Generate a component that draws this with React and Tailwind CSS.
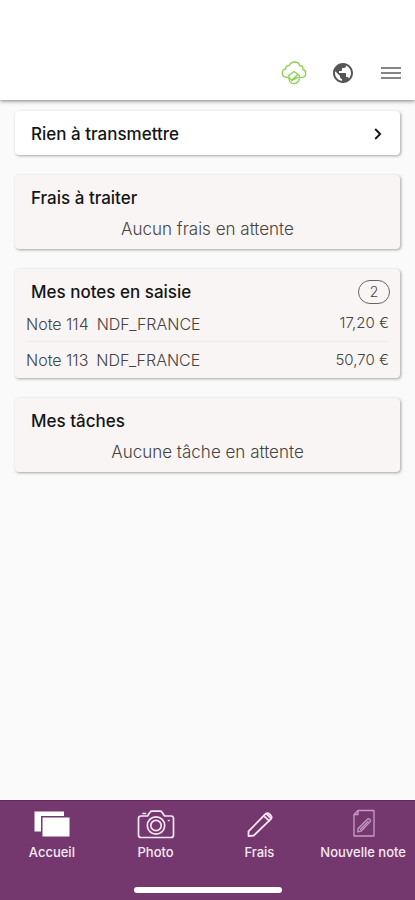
import React from 'react';
import { MdPublic } from 'react-icons/md';

const NOTES = [
  { id: 114, company: 'NDF_FRANCE', amount: '17,20 €' },
  { id: 113, company: 'NDF_FRANCE', amount: '50,70 €' },
];

function CloudIcon() {
  return (
    <svg width="26" height="26" viewBox="0 0 26 26" fill="none" stroke="#8bd04f" strokeWidth="1.3" strokeLinecap="round" strokeLinejoin="round">
      <path d="M6.8 17.3H5.2C2.8 17 1.3 15.2 1.3 13C1.3 10.8 2.8 9.2 4.8 8.9C4.5 6.7 6 5.3 8.2 5.6C9.2 3.2 11 2 13.5 2C16.2 2 18.2 3.5 18.9 5.8C21.3 5.5 22.5 7.3 21.8 9.3C23.7 9.8 24.7 11.2 24.7 13.2C24.7 15.5 23.3 17.2 21 17.3H19.3" />
      <path d="M7.6 15.8L13 11.5L18.2 15.3" />
      <path d="M7.9 16C7.2 20.5 9.8 23.7 13 23.7C16.6 23.7 19 20.4 18.2 15.6" />
      <path d="M8.5 18.2L11 19.9L16.6 14.8M10.6 20.8L16.8 17.4" />
    </svg>
  );
}

function MenuIcon() {
  return (
    <svg width="20" height="14" viewBox="0 0 20 14" fill="#858585">
      <rect y="1" width="20" height="2" />
      <rect y="6" width="20" height="2" />
      <rect y="11" width="20" height="2" />
    </svg>
  );
}

function ChevronIcon() {
  return (
    <svg width="8" height="12" viewBox="0 0 8 12" fill="none" stroke="#111" strokeWidth="1.8">
      <path d="M1.2 1L6.2 6L1.2 11" />
    </svg>
  );
}

function HomeIcon() {
  return (
    <svg width="38" height="30" viewBox="0 0 38 30" fill="#fff">
      <path d="M1.5 2.5H31V7H8V22.5H1.5Z" />
      <rect x="9.5" y="8.5" width="27" height="19" />
    </svg>
  );
}

function CameraIcon() {
  return (
    <svg width="38" height="30" viewBox="0 0 38 30" fill="none" stroke="#f5e6f3" strokeWidth="1.7" strokeLinecap="round" strokeLinejoin="round">
      <path d="M4 7H10.5L13 3.2Q13.6 2.2 14.8 2.2H23.2Q24.4 2.2 25 3.2L27.5 7H34Q36.5 7 36.5 9.5V26Q36.5 28.5 34 28.5H4Q1.5 28.5 1.5 26V9.5Q1.5 7 4 7Z" />
      <circle cx="19" cy="16.5" r="8.7" />
      <circle cx="19" cy="16.5" r="5.2" />
      <path d="M6 4.5H8.5M31.5 11.5H32" />
    </svg>
  );
}

function PencilIcon() {
  return (
    <svg width="30" height="30" viewBox="0 0 30 30" fill="none" stroke="#f5e6f3" strokeWidth="1.8" strokeLinecap="round" strokeLinejoin="round">
      <path d="M4.5 27.2V22.3L21.3 5.2Q23.3 3.2 25.3 5L26.8 6.5Q28.5 8.3 26.8 10.2L9.8 26.5L4.5 27.2Z" />
      <path d="M19.8 6.8L25.2 11.8M22.5 4.8L27 9.3" />
    </svg>
  );
}

function NewNoteIcon() {
  return (
    <svg width="24" height="30" viewBox="0 0 24 30" fill="none" stroke="#c79bc4" strokeWidth="1.3" strokeLinejoin="round">
      <path d="M7 1.5H23V27H3V5.5ZM7 1.5V5.5H3" />
      <path d="M6.8 22.8L7.2 19.5L16.5 10.2Q17.5 9.3 18.5 10.2L19.2 10.9Q20 11.9 19 12.9L10 22.2Z" />
      <path d="M9 20.8L17.5 12.2" />
    </svg>
  );
}

const TABS = [
  { label: 'Accueil', icon: HomeIcon },
  { label: 'Photo', icon: CameraIcon },
  { label: 'Frais', icon: PencilIcon },
  { label: 'Nouvelle note', icon: NewNoteIcon },
];

function Card({ title, badge, children }) {
  return (
    <section className="rounded-[4px] bg-[#f9f5f4] pt-[9px] shadow-[1px_1px_3px_rgba(0,0,0,0.35)]">
      <div className="flex items-center justify-between pr-2.5 pl-4">
        <h2 className="text-[17px] leading-7 font-medium text-[#151515]">{title}</h2>
        {badge && (
          <span className="flex h-6 w-8 items-center justify-center rounded-full border border-[#666] text-sm font-light text-[#444]">
            {badge}
          </span>
        )}
      </div>
      {children}
    </section>
  );
}

function EmptyText({ children }) {
  return <p className="pt-1 pb-[7px] text-center text-[17px] leading-[26px] font-light text-[#444]">{children}</p>;
}

export default function App() {
  return (
    <div className="flex min-h-screen flex-col bg-[#fafafa] font-['Inter',sans-serif]">
      {/* Top bar */}
      <header className="z-10 flex items-center justify-end bg-white pt-[58px] pr-3.5 pb-3 shadow-[0_1px_4px_rgba(0,0,0,0.5)]">
        <button className="mr-6" aria-label="Synchronisation">
          <CloudIcon />
        </button>
        <button className="mr-[26px]" aria-label="Langue">
          <MdPublic size={24} color="#555" />
        </button>
        <button className="py-2" aria-label="Menu">
          <MenuIcon />
        </button>
      </header>

      <main className="flex flex-1 flex-col gap-5 px-[15px] pt-[11px]">
        <button className="flex items-center justify-between rounded-[4px] bg-white pt-[9px] pr-[18px] pb-[7px] pl-4 text-[17px] leading-7 font-medium text-[#151515] shadow-[1px_1px_3px_rgba(0,0,0,0.35)]">
          Rien à transmettre
          <ChevronIcon />
        </button>

        <Card title="Frais à traiter">
          <EmptyText>Aucun frais en attente</EmptyText>
        </Card>

        <Card title="Mes notes en saisie" badge={NOTES.length}>
          <ul className="divide-y divide-[#f0ebeb] px-[11px] font-light text-[#444]">
            {NOTES.map((note) => (
              <li key={note.id} className="flex h-9 items-center justify-between">
                <span className="flex gap-2 text-base">
                  <span>Note {note.id}</span>
                  <span>{note.company}</span>
                </span>
                <span className="text-[15px]">{note.amount}</span>
              </li>
            ))}
          </ul>
        </Card>

        <Card title="Mes tâches">
          <EmptyText>Aucune tâche en attente</EmptyText>
        </Card>
      </main>

      {/* Bottom navigation */}
      <footer className="border-t border-[#652b60] bg-[#74386f] pb-[7px]">
        <nav className="grid grid-cols-4 pt-2">
          {TABS.map(({ label, icon: Icon }) => (
            <a key={label} href="#" className="flex flex-col items-center gap-1 text-[13px] leading-[18px] font-medium whitespace-nowrap text-[#f5e9f4]">
              <Icon />
              {label}
            </a>
          ))}
        </nav>
        <div className="mx-auto mt-[26px] h-1.5 w-[148px] rounded-full bg-white" />
      </footer>
    </div>
  );
}
